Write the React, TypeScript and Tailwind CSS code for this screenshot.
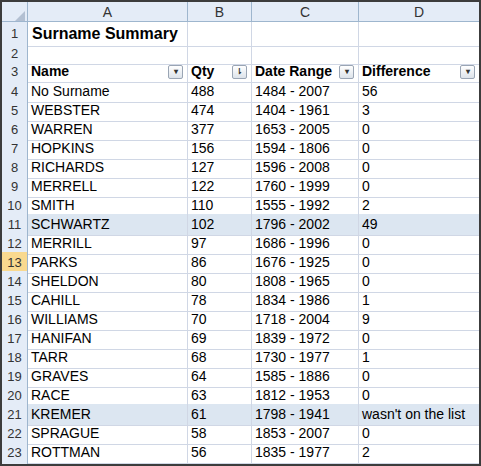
const rows: [string, string, string, string][] = [
  ["No Surname", "488", "1484 - 2007", "56"],
  ["WEBSTER", "474", "1404 - 1961", "3"],
  ["WARREN", "377", "1653 - 2005", "0"],
  ["HOPKINS", "156", "1594 - 1806", "0"],
  ["RICHARDS", "127", "1596 - 2008", "0"],
  ["MERRELL", "122", "1760 - 1999", "0"],
  ["SMITH", "110", "1555 - 1992", "2"],
  ["SCHWARTZ", "102", "1796 - 2002", "49"],
  ["MERRILL", "97", "1686 - 1996", "0"],
  ["PARKS", "86", "1676 - 1925", "0"],
  ["SHELDON", "80", "1808 - 1965", "0"],
  ["CAHILL", "78", "1834 - 1986", "1"],
  ["WILLIAMS", "70", "1718 - 2004", "9"],
  ["HANIFAN", "69", "1839 - 1972", "0"],
  ["TARR", "68", "1730 - 1977", "1"],
  ["GRAVES", "64", "1585 - 1886", "0"],
  ["RACE", "63", "1812 - 1953", "0"],
  ["KREMER", "61", "1798 - 1941", "wasn't on the list"],
  ["SPRAGUE", "58", "1853 - 2007", "0"],
  ["ROTTMAN", "56", "1835 - 1977", "2"],
  ["KING", "49", "1820 - 1951", ""],
];

const cols = "grid grid-cols-[26px_160px_64px_107px_121px]";

function Drop({ sort }: { sort?: boolean }) {
  return (
    <span className="w-[15px] h-[14px] border border-[#9aa5b4] rounded-[2px] bg-gradient-to-b from-white to-[#dde3ea] flex items-center justify-center text-[8px] text-[#333] leading-none">
      {sort ? "⇂" : "▾"}
    </span>
  );
}

export default function App() {
  return (
    <div className="w-[481px] h-[466px] overflow-hidden bg-white border-2 border-[#3c3c3c] text-[14px] text-black" style={{ fontFamily: "Arial, 'Liberation Sans', sans-serif" }}>
      <div className={`${cols} h-[20px] bg-[#e4ecf7] border-b border-[#9eb6ce] text-[#27413e]`}>
        <div className="border-r border-[#9eb6ce] flex items-end justify-end p-[2px]"><span className="w-0 h-0 border-l-[10px] border-l-transparent border-b-[10px] border-b-[#b3c0d2]" /></div>
        {["A", "B", "C", "D"].map((c) => (
          <div key={c} className="border-r border-[#9eb6ce] flex items-center justify-center text-[#333]">{c}</div>
        ))}
      </div>
      <Row n="1" h="h-[22px]" cells={["Surname Summary", "", "", ""]} title />
      <Row n="2" h="h-[17px]" cells={["", "", "", ""]} />
      <div className={`${cols} h-[20px]`}>
        <Hdr n="3" />
        {[["Name", false], ["Qty", true], ["Date Range", false], ["Difference", false]].map(([t, s]) => (
          <div key={t as string} className="border-r border-b border-[#d0d7e5] flex items-center justify-between pl-[3px] pr-[4px] font-bold">
            <span>{t}</span>
            <Drop sort={s as boolean} />
          </div>
        ))}
      </div>
      {rows.map((r, i) => (
        <Row key={i} n={String(i + 4)} h="h-[19px]" cells={r} hl={i === 7 || i === 17} sel={i === 9} />
      ))}
    </div>
  );
}

function Hdr({ n, sel }: { n: string; sel?: boolean }) {
  return (
    <div className={`${sel ? "bg-[#f9d98f] text-[#333]" : "bg-[#e4ecf7] text-[#333]"} border-r border-b border-[#9eb6ce] flex items-center justify-center text-[13px]`}>{n}</div>
  );
}

function Row({ n, h, cells, hl, sel, title }: { n: string; h: string; cells: string[]; hl?: boolean; sel?: boolean; title?: boolean }) {
  return (
    <div className={`${cols} ${h}`}>
      <Hdr n={n} sel={sel} />
      {cells.map((c, j) => (
        <div key={j} className={`${hl ? "bg-[#dce6f1]" : ""} border-r border-b border-[#d0d7e5] flex items-center pl-[3px] whitespace-nowrap overflow-visible ${title ? "font-bold text-[16px] pl-[4px]" : ""}`}>{c}</div>
      ))}
    </div>
  );
}
